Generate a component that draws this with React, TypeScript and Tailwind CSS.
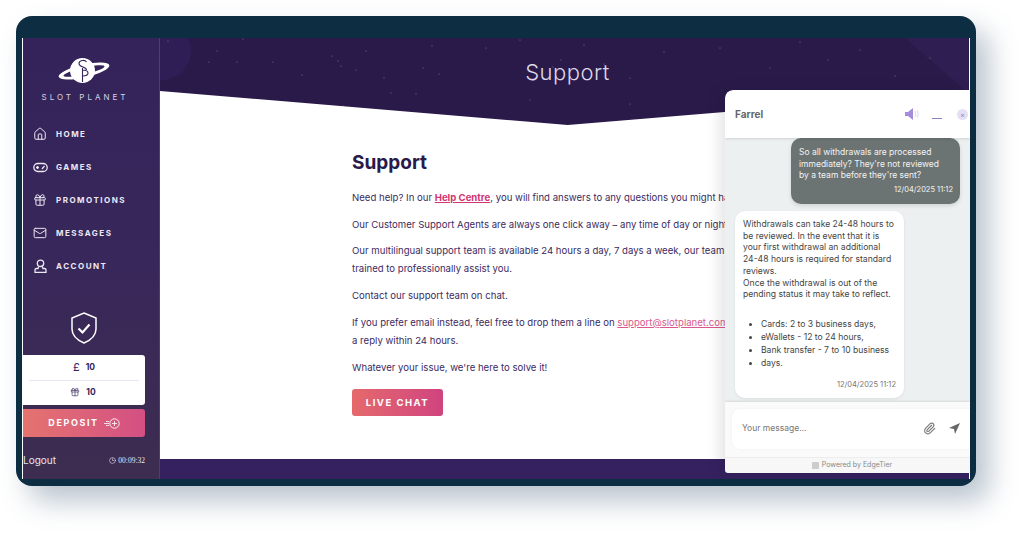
import { Gift, House, Mail, Clock3, Paperclip } from "lucide-react";
import type { ReactNode } from "react";

const GamepadIcon = () => (
  <svg width="15" height="15" viewBox="0 0 15 15" fill="none" stroke="currentColor" strokeWidth="1.300">
    <rect x="0.800" y="3.500" width="13.400" height="8" rx="4" />
    <path d="M3 7.500h3M4.500 6v3M9 9l2.500-3" />
  </svg>
);

const UserIcon = () => (
  <svg width="15" height="15" viewBox="0 0 15 15" fill="none" stroke="currentColor" strokeWidth="1.300">
    <circle cx="7.500" cy="4.300" r="3.200" />
    <path d="M5.800 7.500 5 9.500H3.500A1.500 1.500 0 0 0 2 11v2.400h11V11a1.500 1.500 0 0 0-1.500-1.500H10l-.8-2" />
  </svg>
);

const navItems: { label: string; icon: ReactNode }[] = [
  { label: "HOME", icon: <House size={14} strokeWidth={1.700} /> },
  { label: "GAMES", icon: <GamepadIcon /> },
  { label: "PROMOTIONS", icon: <Gift size={14} strokeWidth={1.700} /> },
  { label: "MESSAGES", icon: <Mail size={14} strokeWidth={1.700} /> },
  { label: "ACCOUNT", icon: <UserIcon /> },
];

const stars = [
  [8, 3], [57, 13], [83, 1], [49, 24], [77, 24], [113, 24], [172, 18], [178, 23], [181, 28], [142, 37], [206, 13], [196, 32],
  [272, 8], [263, 30], [224, 40], [231, 55], [256, 56], [326, 10], [360, 2], [393, 29], [401, 22], [424, 7], [444, 26], [470, 40], [504, 14],
  [560, 10], [610, 30], [640, 4], [668, 22], [700, 12], [735, 38], [770, 20], [279, 36], [183, 68], [248, 80], [370, 62], [470, 66],
];

const Logo = () => (
  <svg width="52" height="28" viewBox="0 0 52 28" className="text-white">
    <ellipse cx="26" cy="14" rx="26" ry="6.500" transform="rotate(-13 26 14)" fill="currentColor" />
    <ellipse cx="26" cy="14" rx="21" ry="3.500" transform="rotate(-13 26 14)" fill="#35245a" />
    <circle cx="24.500" cy="13.500" r="12.500" fill="currentColor" />
    <path d="M28.500 5c-1.500-2.500-7.500-2-7.500 1.500 0 4 7.500 3 7.500 6.500" fill="none" stroke="#35245a" strokeWidth="1.100" />
    <path d="M24.500 11v14M24.500 13c4 0 5.500 1 5.500 3s-2 3-5.500 3" fill="none" stroke="#35245a" strokeWidth="1.100" />
  </svg>
);

const ChatHeader = () => (
  <div className="h-[48px] shrink-0 flex items-center pl-[10px] bg-white rounded-tl-[8px] shadow-[0_1px_3px_rgba(0,0,0,0.12)] z-10">
    <span className="text-[10px] font-bold text-[#666]">Farrel</span>
    <svg width="14" height="12" viewBox="0 0 14 12" className="ml-[142px] mb-[1px]">
      <path d="M0 4h3l5-4v12l-5-4H0z" fill="#a88cdc" />
      <path d="M10 3c1 1.500 1 4.500 0 6M12 2c1.500 2 1.500 6 0 8" fill="none" stroke="#dcd2f0" strokeWidth="1" />
    </svg>
    <div className="ml-[13px] mt-[9px] w-[10px] h-[1px] bg-[#8f80b5]" />
    <div className="ml-[15px] w-[11px] h-[11px] rounded-full bg-[#e5dff5] flex items-center justify-center text-[7px] leading-none text-[#8f80b5]">
      ×
    </div>
  </div>
);

const ChatPanel = () => (
  <div
    className="absolute left-[709px] top-[74px] w-[245px] h-[383px] flex flex-col rounded-tl-[8px] rounded-bl-[3px] overflow-hidden shadow-[-6px_0_14px_rgba(0,0,0,0.1)]"
    style={{ fontFamily: "Inter, sans-serif" }}
  >
    <ChatHeader />
    <div className="flex-1 bg-[#edf0f1] overflow-hidden">
      <div className="ml-[66px] w-[169px] h-[66px] bg-[#6c7473] rounded-[10px] pl-[8px] pr-[7px] pt-[9px] text-[#f2f3f3] text-[8.500px] leading-[11.500px] shadow-[0_2px_4px_rgba(0,0,0,0.12)]">
        <div className="whitespace-nowrap">So all withdrawals are processed</div>
        <div className="whitespace-nowrap">immediately? They're not reviewed</div>
        <div className="whitespace-nowrap">by a team before they're sent?</div>
        <div className="text-right text-[7.500px] mt-[2px]">12/04/2025 11:12</div>
      </div>
      <div className="ml-[10px] mt-[7px] w-[169px] h-[187px] bg-white rounded-[10px] pl-[8px] pt-[8px] text-[#444] text-[8.600px] leading-[11.700px] shadow-[0_1px_3px_rgba(0,0,0,0.08)]">
        <div className="whitespace-nowrap">Withdrawals can take 24-48 hours to</div>
        <div className="whitespace-nowrap">be reviewed. In the event that it is</div>
        <div className="whitespace-nowrap">your first withdrawal an additional</div>
        <div className="whitespace-nowrap">24-48 hours is required for standard</div>
        <div className="whitespace-nowrap">reviews.</div>
        <div className="whitespace-nowrap">Once the withdrawal is out of the</div>
        <div className="whitespace-nowrap">pending status it may take to reflect.</div>
        <ul className="list-disc pl-[18px] mt-[17px] leading-[13px]">
          <li className="whitespace-nowrap">Cards: 2 to 3 business days,</li>
          <li className="whitespace-nowrap">eWallets - 12 to 24 hours,</li>
          <li className="whitespace-nowrap">Bank transfer - 7 to 10 business</li>
          <li>days.</li>
        </ul>
        <div className="text-right text-[7.500px] text-[#777] mt-[9px] pr-[8px]">12/04/2025 11:12</div>
      </div>
    </div>
    <div className="bg-[#fafafa] h-[55px] shrink-0 pl-[7px] pt-[7px] shadow-[0_-1px_2px_rgba(0,0,0,0.1)] z-10">
      <div className="h-[40px] bg-white rounded-l-[8px] flex items-center pl-[10px] pb-[2px] shadow-[0_0_3px_rgba(0,0,0,0.05)]">
        <span className="text-[8.500px] text-[#777]">Your message...</span>
        <Paperclip size={13} className="ml-[116px] text-[#777]" />
        <svg width="11" height="11" viewBox="0 0 11 11" className="ml-[13px]">
          <path d="M11 0 0 5l5 1 1 5z" fill="#666" />
        </svg>
      </div>
    </div>
    <div className="h-[16px] shrink-0 bg-[#f7f7f7] border-t border-[#eee] flex items-center justify-center gap-[3px] pl-[9px] text-[7px] text-[#888]">
      <span className="w-[7px] h-[7px] bg-[#ccc] rounded-[1px]" />
      Powered by EdgeTier
    </div>
  </div>
);

const Sidebar = () => (
  <aside className="w-[137px] shrink-0 flex flex-col bg-gradient-to-b from-[#33235a] via-[#38275a] to-[#3d2d50] border-r border-[#4d3f70]">
    <div className="flex flex-col items-center pt-[19px] pr-[14px]">
      <Logo />
      <div className="text-[8px] tracking-[3px] text-[#d8d3e4] mt-[6px] pl-[2px]">SLOT PLANET</div>
    </div>
    <nav className="mt-[23px] pl-[10px] flex flex-col gap-[17px]">
      {navItems.map(({ label, icon }) => (
        <div key={label} className="flex items-center h-[16px] text-[#ece8f3]">
          <span className="w-[23px] flex">{icon}</span>
          <span className="text-[8px] font-bold tracking-[1.500px]">{label}</span>
        </div>
      ))}
    </nav>
    <div className="flex justify-center mt-[38px] pr-[14px] text-white">
      <svg width="26" height="32" viewBox="0 0 26 32">
        <path d="M13 1 25 6v11c0 7-5 11-12 14C6 28 1 24 1 17V6z" fill="none" stroke="currentColor" strokeWidth="1.500" />
        <path d="M7.500 16.500 11.500 20.500 18.500 12.500" fill="none" stroke="currentColor" strokeWidth="2.200" />
      </svg>
    </div>
    <div className="mt-[11px] w-[122px] h-[50px] bg-white rounded-r-[3px] flex flex-col items-center text-[#33235a] text-[8.500px] font-bold">
      <div className="h-[26px] w-[110px] flex items-center justify-center gap-[6px] border-b border-[#e8e4f5]">
        <span className="text-[11px] font-normal">£</span>
        <span>10</span>
      </div>
      <div className="h-[22px] flex items-center justify-center gap-[6px] pr-[2px]">
        <Gift size={10} strokeWidth={1.500} />
        <span>10</span>
      </div>
    </div>
    <div className="mt-[4px] w-[122px] h-[28px] rounded-r-[3px] bg-gradient-to-r from-[#e5736f] to-[#d34f83] flex items-center justify-center gap-[5px] text-white text-[9px] font-bold tracking-[1.600px]">
      DEPOSIT
      <svg width="16" height="11" viewBox="0 0 16 11">
        <circle cx="10.500" cy="5.500" r="4.700" fill="none" stroke="white" strokeWidth="0.900" />
        <path d="M10.500 3v5M8 5.500h5M0 5.500h5M2 3.500h3M2 7.500h3" stroke="white" strokeWidth="0.800" />
      </svg>
    </div>
    <div className="mt-[16px] flex items-center justify-between w-[122px] text-[#e8e4ee]">
      <span className="text-[10px]">Logout</span>
      <span className="flex items-center gap-[2px] text-[7.500px]" style={{ fontFamily: '"Liberation Serif", serif' }}>
        <Clock3 size={7} />
        00:09:32
      </span>
    </div>
  </aside>
);

export default function App() {
  return (
    <div className="w-[1024px] h-[534px] bg-white p-[16px] overflow-hidden" style={{ fontFamily: "Inter, sans-serif" }}>
      <div className="relative w-[960px] h-[470px] bg-[#0d2d42] rounded-[16px] pt-[22px] pb-[7px] pl-[6px] pr-[6px] shadow-[13px_15px_28px_rgba(70,100,125,0.38)]">
        <div className="h-[441px] flex bg-white pl-[1px] pr-[1px]">
          <Sidebar />
          <main className="flex-1 flex flex-col bg-[#2a1a4a] relative overflow-hidden">
            <header className="h-[87px] shrink-0 relative flex justify-center pt-[20px]">
              <svg className="absolute left-0 top-0" width="808" height="87" viewBox="0 0 808 87">
                <circle cx="2" cy="13" r="29" fill="#2f1e56" />
                <path d="M745 0h63v55z" fill="#2e1e52" />
                {stars.map(([x, y]) => (
                  <circle key={`${x}-${y}`} cx={x} cy={y} r="0.600" fill="#7d7296" />
                ))}
              </svg>
              <h1 className="relative ml-[6px] text-[22px] leading-[28px] font-light text-[#dcd8e6] tracking-[0.500px]">Support</h1>
            </header>
            <div className="absolute left-0 top-[53px] w-full h-[34px] bg-white [clip-path:polygon(0_0,50.400%_100%,100%_3%,100%_100%,0_100%)]" />
            <div className="flex-1 bg-white pl-[192px] pt-[26px] overflow-hidden">
              <div className="w-[373px] overflow-hidden text-[#3b2b5f] text-[9.600px] leading-[18px] whitespace-nowrap">
                <h2 className="text-[19px] leading-[24px] font-bold text-[#2a1a4a]">Support</h2>
                <p className="mt-[14px]">
                  Need help? In our <span className="font-bold text-[#d1366f] underline">Help Centre</span>, you will find answers to any questions you might have.
                </p>
                <p className="mt-[9px]">Our Customer Support Agents are always one click away – any time of day or night.</p>
                <p className="mt-[8px]">
                  Our multilingual support team is available 24 hours a day, 7 days a week, our team
                  <br />
                  trained to professionally assist you.
                </p>
                <p className="mt-[9px]">Contact our support team on chat.</p>
                <p className="mt-[9px]">
                  If you prefer email instead, feel free to drop them a line on <span className="text-[#d9588f] underline">support@slotplanet.com</span>
                  <br />
                  a reply within 24 hours.
                </p>
                <p className="mt-[9px]">Whatever your issue, we're here to solve it!</p>
                <button className="mt-[12px] w-[91px] h-[27px] rounded-[3px] bg-gradient-to-r from-[#e5696b] to-[#d0437f] text-white text-[9.500px] font-bold tracking-[1.500px]">
                  LIVE CHAT
                </button>
              </div>
            </div>
            <div className="h-[20px] shrink-0 bg-[#35215f]" />
          </main>
        </div>
        <ChatPanel />
      </div>
    </div>
  );
}
